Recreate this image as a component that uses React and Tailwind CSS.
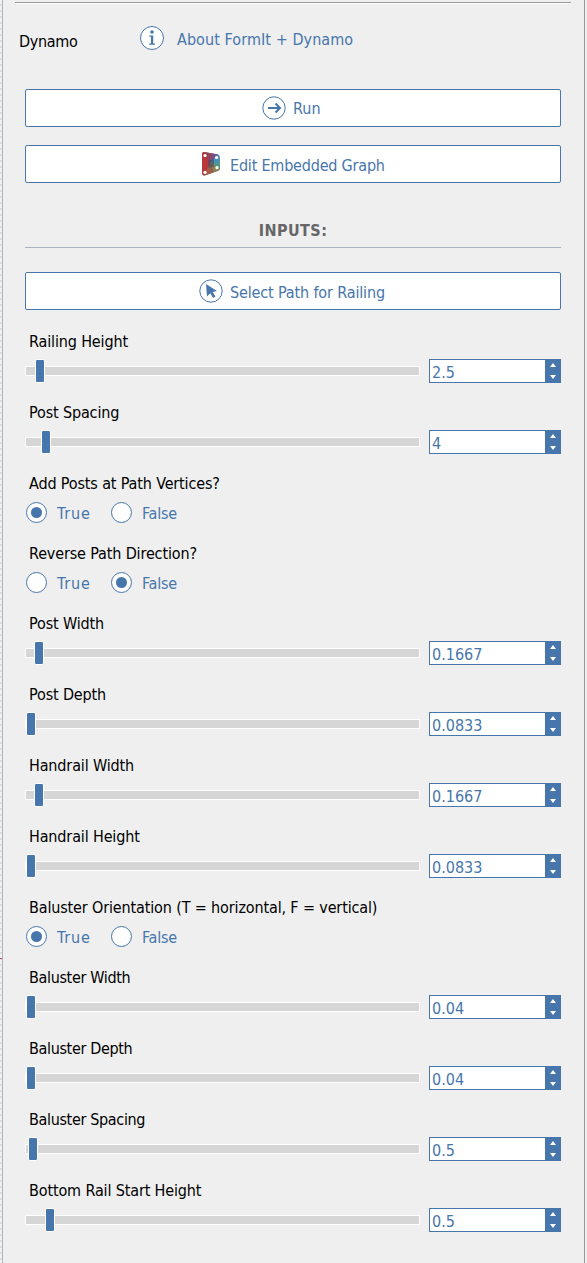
import React from "react";

const TEXT = "text-[16px] leading-[26px] h-6 whitespace-nowrap";

function Label({ children, tight }) {
  return (
    <div className={`${TEXT} ml-1 text-black ${tight ? "tracking-[-0.34px]" : "tracking-[-0.14px]"}`}>
      {children}
    </div>
  );
}

function Slider({ label, value, pos, tight }) {
  return (
    <div className="h-[71px]">
      <Label tight={tight}>{label}</Label>
      <div className="mt-1.5 flex h-6 items-center">
        <div className="relative h-2.5 w-[395px] border border-white bg-[#d6d6d6]">
          <div
            className="absolute -top-2 h-6 w-2.5 rounded-[2px] border border-white bg-[#4776ac]"
            style={{ left: pos }}
          />
        </div>
        <div className="ml-[9px] flex h-6 w-[132px] border border-[#4776ac] bg-white">
          <div className="h-[22px] flex-1 pl-0.5 text-[16px] leading-[25px] text-[#4776ac]">{value}</div>
          <div className="flex w-[15px] flex-col items-center justify-between bg-[#4776ac] py-[3px] pl-px">
            <svg width="6" height="4" viewBox="0 0 6 4"><path d="M3 0L6 4H0z" fill="#fff" /></svg>
            <svg width="6" height="4" viewBox="0 0 6 4"><path d="M0 0H6L3 4z" fill="#fff" /></svg>
          </div>
        </div>
      </div>
    </div>
  );
}

function Radio({ label, on, className, textClass }) {
  return (
    <div className={`flex items-center ${className}`}>
      <div className="-mt-px flex size-[21px] items-center justify-center rounded-full border border-[#4776ac] bg-white">
        {on && <div className="size-[11px] rounded-full bg-[#4776ac]" />}
      </div>
      <span className={`${TEXT} ml-2.5 text-[#4776ac] ${textClass}`}>{label}</span>
    </div>
  );
}

function Choice({ label, value, tight }) {
  return (
    <div className="h-[70px]">
      <Label tight={tight}>{label}</Label>
      <div className="mt-[6px] ml-px flex h-6 items-center">
        <Radio label="True" on={value} className="w-[85px]" textClass="tracking-[0.8px]" />
        <Radio label="False" on={!value} className="" textClass="tracking-[-0.2px]" />
      </div>
    </div>
  );
}

function Button({ children, className }) {
  return (
    <div className={`flex h-[38px] items-center rounded-[2px] border border-[#4776ac] bg-white text-[#4776ac] ${className}`}>
      {children}
    </div>
  );
}

function DynamoLogo() {
  return (
    <svg className="-mt-px" width="20" height="24" viewBox="0 0 20 24">
      <path d="M1 2Q1 0 3 0L17 2.5Q18.5 3 18.6 5L19 16.500Q19 18 17.500 18.700L4 23.600Q1.500 24 1.200 21.500z" fill="#7d6350" />
      <path d="M1 2Q1 0 3 0L9 11L3 23.500Q1.300 23 1.200 21.500z" fill="#b8383a" />
      <path d="M3 0L12 1.600L9 11z" fill="#93445c" />
      <path d="M12 1.600L17 2.500L9 11z" fill="#70508f" />
      <path d="M17 2.500Q18.500 3 18.600 5L19 16.500L9 11z" fill="#4592b4" />
      <path d="M18.500 11L19 17L9 11z" fill="#55987f" />
      <path d="M19 17L13 20.300L9 11z" fill="#8d8454" />
      <path d="M3 23.500L9 11L11 21z" fill="#a85c48" />
      <path d="M7 8L13 7.500V15L7.500 16z" fill="#4b4a60" opacity=".6" />
      <g fill="#fff">
        <circle cx="4" cy="3.500" r="1.600" />
        <circle cx="15.500" cy="5.500" r="1.600" />
        <circle cx="16" cy="15.700" r="1.600" />
        <circle cx="4" cy="20.300" r="1.600" />
      </g>
    </svg>
  );
}

export default function App() {
  return (
    <div className="flex h-[1263px] w-[587px] overflow-hidden bg-[#efefef] font-['DejaVu_Sans_Condensed','DejaVu_Sans',sans-serif] [font-stretch:condensed]">
      <div className="w-[3px] shrink-0 border-r border-[#a9b4c8] bg-[repeating-linear-gradient(#f2f2f2_0_4px,#dddddd_4px_6px)] pt-[958px]">
        <div className="h-px w-0.5 bg-[#cc4455]" />
      </div>
      <div className="w-[582px] shrink-0 border-r border-[#999] pt-0.5">
        <div className="ml-3 h-[2px] w-[556px] border-t border-[#999] bg-white" />
        <div className="flex h-[85px] pl-4">
          <span className={`${TEXT} mt-[25px] w-[120px] tracking-[-0.3px] text-black`}>Dynamo</span>
          <svg className="mt-[21px]" width="26" height="26" viewBox="0 0 26 26">
            <circle cx="13" cy="13" r="11.5" fill="#fff" stroke="#4776ac" />
            <circle cx="13" cy="7" r="1.800" fill="#4776ac" />
            <path d="M10.300 10.500H14.200V18.500H16V19.700H10.200V18.500H12V11.700H10.300z" fill="#4776ac" />
          </svg>
          <span className={`${TEXT} mt-[23px] ml-3 tracking-[0.07px] text-[#4776ac]`}>About FormIt + Dynamo</span>
        </div>
        <div className="ml-[22px] w-[536px]">
          <Button className="pl-[236px]">
            <svg width="24" height="24" viewBox="0 0 24 24" fill="none" stroke="#4776ac">
              <circle cx="12" cy="12" r="11.2" />
              <path d="M6 12H18M13.5 7.5L18 12L13.5 16.5" strokeWidth="2" />
            </svg>
            <span className={`${TEXT} ml-[7px]`}>Run</span>
          </Button>
          <Button className="mt-[18px] pl-[175px]">
            <DynamoLogo />
            <span className={`${TEXT} mt-px ml-[9px] tracking-[-0.2px]`}>Edit Embedded Graph</span>
          </Button>
          <div className="mt-[18px] h-[47px] border-b border-[#a9b4c0] pt-[17px] text-center">
            <div className={`${TEXT} font-bold tracking-[0.45px] text-[#666]`}>INPUTS:</div>
          </div>
          <Button className="mt-6 pl-[173px]">
            <svg width="24" height="24" viewBox="0 0 24 24">
              <circle cx="12" cy="12" r="11.2" fill="none" stroke="#4776ac" />
              <path d="M7 5L18 12L13.500 13L16.500 17.500L14 19L11.300 14.300L8 17.500z" fill="#4776ac" />
            </svg>
            <span className={`${TEXT} mt-px ml-[7px] tracking-[-0.14px]`}>Select Path for Railing</span>
          </Button>
          <div className="mt-[19px]">
            <Slider label="Railing Height" value="2.5" pos={9} />
            <Slider label="Post Spacing" value="4" pos={15} />
            <Choice label="Add Posts at Path Vertices?" value={true} />
            <Choice label="Reverse Path Direction?" value={false} />
            <Slider label="Post Width" value="0.1667" pos={8} />
            <Slider label="Post Depth" value="0.0833" pos={0} />
            <Slider label="Handrail Width" value="0.1667" pos={8} />
            <Slider label="Handrail Height" value="0.0833" pos={0} />
            <Choice label="Baluster Orientation (T = horizontal, F = vertical)" value={true} />
            <Slider label="Baluster Width" value="0.04" pos={0} tight />
            <Slider label="Baluster Depth" value="0.04" pos={0} tight />
            <Slider label="Baluster Spacing" value="0.5" pos={2} tight />
            <Slider label="Bottom Rail Start Height" value="0.5" pos={19} />
          </div>
        </div>
      </div>
    </div>
  );
}
